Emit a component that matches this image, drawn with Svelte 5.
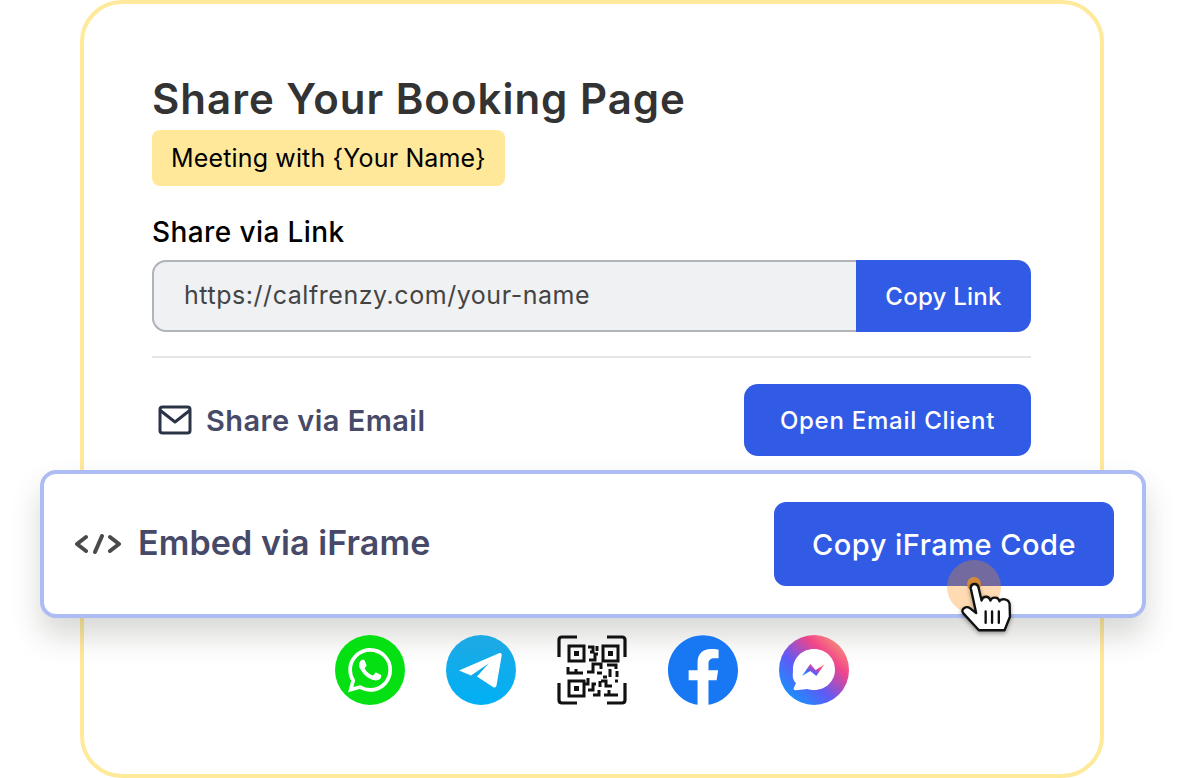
<script lang="ts">
  const qrBits = [
    'M31 12h5v5h-3M40 11v5M32 25h6v-6h3',
    'M11 32v6h15M19 34v4M30 37h6v-8h8v5M40 38h5M50 30h9v4M53 34v8M46 42h4M60 36v6',
    'M31 43v6h-4M31 55h5v-6h3M44 46h5v5h6M43 46v6M58 46h3M36 60h6v-5M52 55v5h-5M52 60h9'
  ];
</script>

<main class="card">
  <h1 class="title">Share Your Booking Page</h1>
  <div class="badge">Meeting with {'{'}Your Name{'}'}</div>

  <div class="label">Share via Link</div>
  <div class="link-row">
    <div class="url">https://calfrenzy.com/your-name</div>
    <button class="btn copy-link">Copy Link</button>
  </div>

  <hr class="divider" />

  <div class="email-row">
    <div class="row-title">
      <svg class="mail" width="34" height="30" viewBox="0 0 34 30" fill="none" stroke="#2b3447" stroke-width="3" stroke-linejoin="round" stroke-linecap="round">
        <rect x="2" y="2" width="30" height="26" rx="2.500" />
        <path d="M3 6l14 11L31 6" />
      </svg>
      <span>Share via Email</span>
    </div>
    <button class="btn open-email">Open Email Client</button>
  </div>

  <section class="embed">
    <div class="row-title big">
      <svg class="code" width="46" height="20" viewBox="0 0 46 20" fill="none" stroke="#4a4a4c" stroke-width="4" stroke-linecap="round" stroke-linejoin="round">
        <path d="M11 3L2 10l9 7M27 2l-7 16M35 3l9 7-9 7" />
      </svg>
      <span>Embed via iFrame</span>
    </div>
    <button class="btn copy-frame">
      Copy iFrame Code
      <span class="halo"></span>
      <span class="dot"></span>
      <svg class="hand" width="54" height="54" viewBox="960 70 160 160" stroke="#111" stroke-width="7" stroke-linejoin="round" stroke-linecap="round">
        <path fill="#fff" d="M992 92c-1-16 20-18 23-2l9 38c3-14 22-16 26 0 4-12 24-12 27 2 5-9 27-8 30 8l1 38-16 40H1016l-46-50c-10-12 8-24 20-15l18 14z" />
        <path fill="none" d="M1036 160v34M1055 160v34M1075 160v34" />
      </svg>
    </button>
  </section>

  <div class="socials">
    <svg width="70" height="70" viewBox="0 0 70 70">
      <circle cx="35" cy="35" r="35" fill="#04e011" />
      <path transform="translate(13 13) scale(1.84)" fill="#fff" d="M17.472 14.382c-.297-.149-1.758-.867-2.03-.967-.273-.099-.471-.148-.67.15-.197.297-.767.966-.94 1.164-.173.199-.347.223-.644.075-.297-.15-1.255-.463-2.39-1.475-.883-.788-1.48-1.761-1.653-2.059-.173-.297-.018-.458.13-.606.134-.133.298-.347.446-.52.149-.174.198-.298.298-.497.099-.198.05-.371-.025-.52-.075-.149-.669-1.612-.916-2.207-.242-.579-.487-.5-.669-.51-.173-.008-.371-.01-.57-.01-.198 0-.52.074-.792.372-.272.297-1.04 1.016-1.04 2.479 0 1.462 1.065 2.875 1.213 3.074.149.198 2.096 3.2 5.077 4.487.709.306 1.262.489 1.694.625.712.227 1.36.195 1.871.118.571-.085 1.758-.719 2.006-1.413.248-.694.248-1.289.173-1.413-.074-.124-.272-.198-.57-.347m-5.421 7.403h-.004a9.87 9.87 0 01-5.031-1.378l-.361-.214-3.741.982.998-3.648-.235-.374a9.86 9.86 0 01-1.51-5.26c.001-5.45 4.436-9.884 9.888-9.884 2.64 0 5.122 1.03 6.988 2.898a9.825 9.825 0 012.893 6.994c-.003 5.45-4.437 9.884-9.885 9.884m8.413-18.297A11.815 11.815 0 0012.05 0C5.495 0 .16 5.335.157 11.892c0 2.096.547 4.142 1.588 5.945L.057 24l6.305-1.654a11.882 11.882 0 005.683 1.448h.005c6.554 0 11.89-5.335 11.893-11.893a11.821 11.821 0 00-3.48-8.413z" />
    </svg>

    <svg width="70" height="70" viewBox="0 0 70 70">
      <defs>
        <linearGradient id="tg" x1="0" y1="0" x2="0" y2="1">
          <stop offset="0" stop-color="#1ea9e4" />
          <stop offset="1" stop-color="#00b0f5" />
        </linearGradient>
      </defs>
      <circle cx="35" cy="35" r="35" fill="url(#tg)" />
      <path fill="#fff" d="M13 35.500L53 18.200c1.800-.700 3 .300 2.700 2.300L50.500 50.500c-.400 2-1.900 2.500-3.500 1.400L31 41.500 42.500 28.500 25 40.500z" />
    </svg>

    <svg width="70" height="70" viewBox="0 0 70 70" fill="none" stroke="#111" stroke-width="3">
      <path stroke-width="3.200" d="M2 22V5q0-3 3-3h15M50 2h15q3 0 3 3v17M2 48v17q0 3 3 3h15M68 48v17q0 3-3 3H50" />
      <rect x="12" y="11" width="15" height="15" />
      <rect x="46" y="11" width="15" height="15" />
      <rect x="12" y="46" width="15" height="15" />
      <rect x="17" y="16" width="5" height="5" fill="#111" stroke="none" />
      <rect x="51" y="16" width="5" height="5" fill="#111" stroke="none" />
      <rect x="17" y="51" width="5" height="5" fill="#111" stroke="none" />
      {#each qrBits as d}
        <path {d} />
      {/each}
    </svg>

    <svg width="70" height="70" viewBox="0 0 24 24">
      <circle cx="12" cy="12" r="12" fill="#fff" />
      <path fill="#1877f2" d="M24 12.073c0-6.627-5.373-12-12-12s-12 5.373-12 12c0 5.990 4.388 10.954 10.125 11.854v-8.385H7.078v-3.470h3.047V9.430c0-3.007 1.792-4.669 4.533-4.669 1.312 0 2.686.235 2.686.235v2.953H15.830c-1.491 0-1.956.925-1.956 1.874v2.250h3.328l-.532 3.470h-2.796v8.385C19.612 23.027 24 18.062 24 12.073z" />
    </svg>

    <svg width="70" height="70" viewBox="0 0 70 70">
      <defs>
        <linearGradient id="ms" x1="0.1" y1="0.95" x2="0.9" y2="0.1">
          <stop offset="0" stop-color="#0a9cfd" />
          <stop offset="0.4" stop-color="#5f5af6" />
          <stop offset="0.75" stop-color="#f1458a" />
          <stop offset="1" stop-color="#f8927a" />
        </linearGradient>
      </defs>
      <circle cx="35" cy="35" r="35" fill="url(#ms)" />
      <path fill="#fff" d="M35 14c12 0 21 9 21 20.500S47 55 35 55c-2.500 0-4.500-.300-6.500-1l-12 1.200c-1.500 0-2.200-.900-1.700-2.200l2.200-5C12.500 44 14 39 14 34.500 14 23 23 14 35 14z" />
      <path fill="url(#ms)" d="M23 41l8.300-12 5.400 6 9-6-8.400 12-6-5z" />
    </svg>
  </div>
</main>

<style>
  :global(body) { margin: 0; background: #fff; }

  .card {
    box-sizing: border-box;
    width: 1024px;
    height: 778px;
    margin-left: 80px;
    padding: 70px 69px 0 68px;
    border: 4px solid #ffe99b;
    border-radius: 42px;
    background: #fff;
    font-family: Inter, "Liberation Sans", sans-serif;
  }

  .title {
    margin: 0;
    font-size: 42px;
    line-height: 50px;
    font-weight: 600;
    color: #333;
    letter-spacing: 1px;
  }

  .badge {
    display: inline-block;
    margin-top: 6px;
    padding: 0 19px;
    height: 56px;
    line-height: 56px;
    font-size: 25px;
    letter-spacing: 0.15px;
    color: #000;
    background: #ffe89a;
    border-radius: 8px;
  }

  .label {
    margin-top: 26px;
    line-height: 40px;
    font-size: 28px;
    letter-spacing: 0.4px;
    font-weight: 500;
    color: #000;
  }

  .link-row { display: flex; height: 72px; margin-top: 8px; }

  .url {
    flex: 1;
    box-sizing: border-box;
    padding-left: 30px;
    line-height: 66px;
    font-size: 25px;
    letter-spacing: 0.55px;
    color: #444;
    background: #f0f1f3;
    border: 2px solid #b0b3ba;
    border-right: none;
    border-radius: 14px 0 0 14px;
  }

  .btn {
    border: none;
    padding: 0;
    background: #315ae5;
    color: #fff;
    font: inherit;
    font-weight: 500;
  }

  .copy-link {
    width: 175px;
    font-size: 24px;
    letter-spacing: 0.25px;
    border-radius: 0 14px 14px 0;
  }

  .divider {
    height: 2px;
    margin: 24px 0 26px;
    border: none;
    background: #e6e6e8;
  }

  .email-row {
    display: flex;
    justify-content: space-between;
    align-items: center;
    height: 72px;
  }

  .row-title {
    display: flex;
    align-items: center;
    font-size: 29px;
    letter-spacing: 0.45px;
    font-weight: 600;
    color: #464a68;
  }

  .mail { margin-left: 6px; margin-right: 14px; }

  .open-email {
    width: 287px;
    height: 72px;
    font-size: 24px;
    letter-spacing: 0.75px;
    border-radius: 14px;
  }

  .embed {
    display: flex;
    justify-content: space-between;
    align-items: center;
    box-sizing: border-box;
    height: 148px;
    margin: 14px -115px 17px -112px;
    padding: 0 28px 0 31px;
    border: 4px solid #adbcf2;
    border-radius: 16px;
    background: #fff;
    box-shadow: 0 18px 30px rgba(60, 60, 50, 0.2);
  }

  .big { font-size: 34px; letter-spacing: 0.1px; line-height: 38px; margin-top: -3px; }
  .code { margin-right: 17px; margin-top: 3px; }

  .copy-frame {
    position: relative;
    width: 340px;
    height: 84px;
    font-size: 29px;
    letter-spacing: 0.5px;
    border-radius: 12px;
  }

  .halo {
    position: absolute;
    left: 173px;
    top: 58px;
    width: 54px;
    height: 54px;
    border-radius: 50%;
    background: rgba(255, 139, 15, 0.32);
  }

  .dot {
    position: absolute;
    left: 193px;
    top: 75px;
    width: 14px;
    height: 14px;
    border-radius: 50%;
    background: #d58a3a;
  }

  .hand {
    position: absolute;
    left: 186px;
    top: 79px;
    filter: drop-shadow(0 2px 2px rgba(0, 0, 0, 0.35));
  }

  .socials {
    display: flex;
    justify-content: center;
    gap: 41px;
  }
</style>
